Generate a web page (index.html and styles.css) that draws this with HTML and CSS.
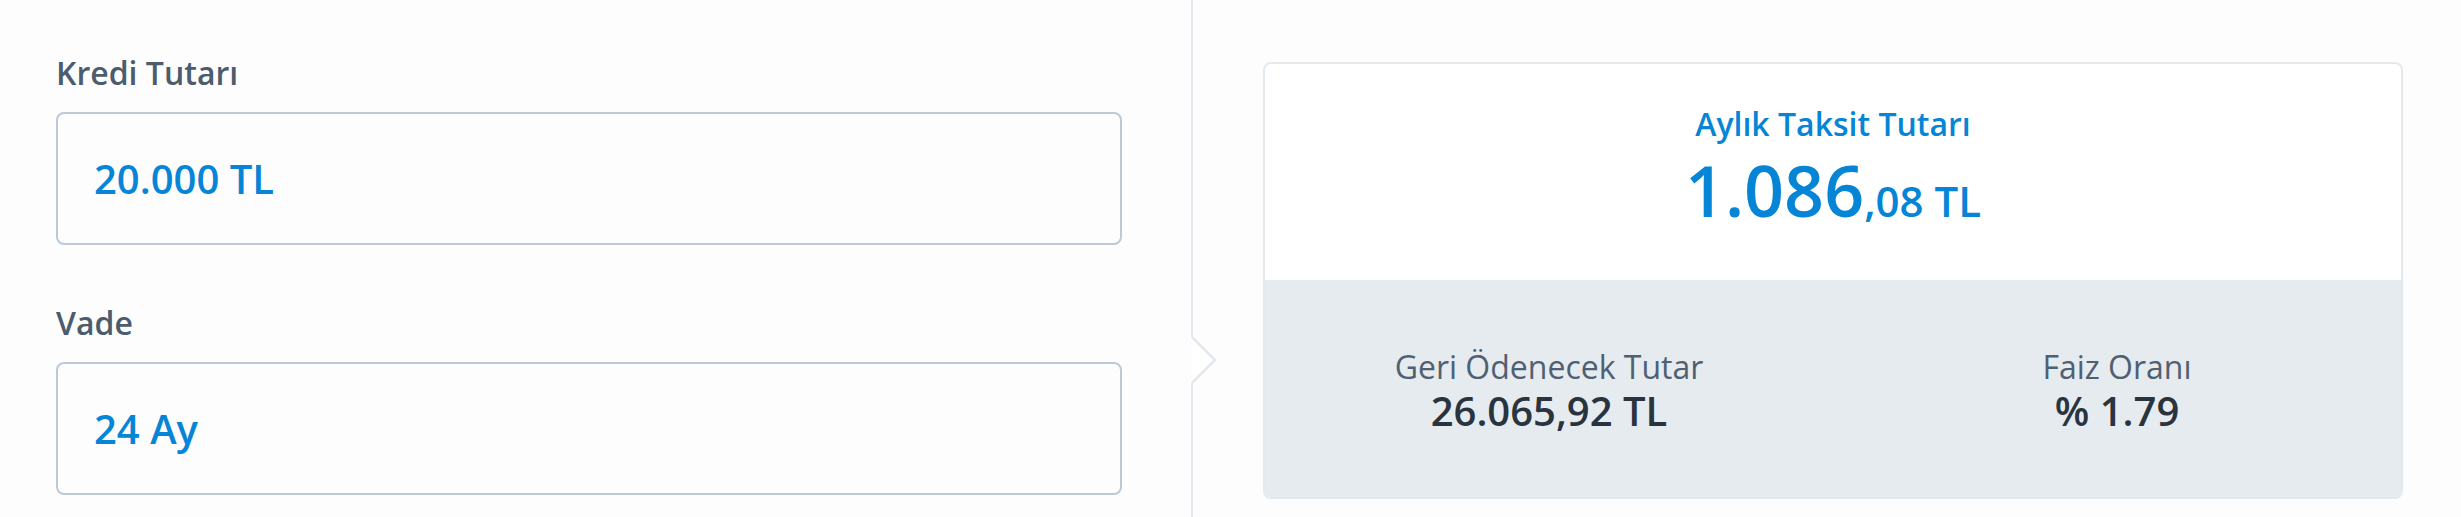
FILE: index.html
```html
<!DOCTYPE html>
<html lang="tr">
<head>
    <meta charset="UTF-8">
    <meta name="viewport" content="width=device-width, initial-scale=1.0">
    <title>Kredi Hesaplama</title>
    <link rel="stylesheet" href="styles.css">
</head>
<body>
    <div class="calculator">
        <div class="form-side">
            <div class="field">
                <label for="amount">Kredi Tutarı</label>
                <input type="text" id="amount" name="amount" value="20.000 TL">
            </div>
            <div class="field">
                <label for="term">Vade</label>
                <input type="text" id="term" name="term" value="24 Ay">
            </div>
        </div>
        <div class="divider">
            <span class="line line-top"></span>
            <svg class="chevron" width="26" height="46" viewBox="0 0 26 46">
                <path d="M1 0 L24 23 L1 46" fill="#ffffff" stroke="#e3e8ee" stroke-width="2.5"/>
            </svg>
            <span class="line line-bottom"></span>
        </div>
        <div class="result-side">
            <div class="result-card">
                <div class="summary">
                    <div class="summary-title">Aylık Taksit Tutarı</div>
                    <div class="summary-amount">1.086<span class="decimals">,08 TL</span></div>
                </div>
                <div class="totals">
                    <div class="total">
                        <div class="total-label">Geri Ödenecek Tutar</div>
                        <div class="total-value">26.065,92 TL</div>
                    </div>
                    <div class="total">
                        <div class="total-label">Faiz Oranı</div>
                        <div class="total-value">% 1.79</div>
                    </div>
                </div>
            </div>
        </div>
    </div>
</body>
</html>
```

FILE: styles.css
```css
body {
    margin: 0;
    padding: 0;
    background-color: #fdfdfe;
    font-family: "Open Sans", "Noto Sans", sans-serif;
}
.calculator {
    display: flex;
    height: 517px;
}
.form-side {
    width: 1191px;
    box-sizing: border-box;
    padding: 51px 69px 0 56px;
    display: flex;
    flex-direction: column;
    gap: 56px;
}
.field {
    display: flex;
    flex-direction: column;
}
.field label {
    color: #4b5c6e;
    font-size: 32px;
    font-weight: 600;
    line-height: 44px;
    margin-bottom: 17px;
}
.field input {
    font-family: inherit;
    font-size: 40px;
    font-weight: 600;
    color: #0685d6;
    background-color: #fdfdfe;
    border: 2px solid #bccad7;
    border-radius: 8px;
    padding: 37px 36px;
    line-height: 54px;
    height: 133px;
    box-sizing: border-box;
    outline: none;
}
.divider {
    width: 26px;
    display: flex;
    flex-direction: column;
}
.line {
    display: block;
    width: 2px;
    background-color: #e3e8ee;
}
.line-top {
    height: 337px;
}
.line-bottom {
    flex: 1;
}
.chevron {
    display: block;
}
.result-side {
    flex: 1;
    padding: 62px 58px 0 46px;
}
.result-card {
    border: 2px solid #e4e9ee;
    border-radius: 8px;
    overflow: hidden;
    background-color: #ffffff;
}
.summary {
    height: 216px;
    box-sizing: border-box;
    padding-top: 38px;
    text-align: center;
    color: #0685d6;
}
.summary-title {
    font-size: 32px;
    font-weight: 600;
    line-height: 44px;
}
.summary-amount {
    margin-top: 9px;
    font-size: 70px;
    font-weight: 600;
    line-height: 1;
}
.decimals {
    font-size: 42px;
}
.totals {
    display: flex;
    height: 217px;
    box-sizing: border-box;
    padding-top: 67px;
    background-color: #e6ebf0;
}
.total {
    flex: 1;
    text-align: center;
}
.total-label {
    color: #4f6072;
    font-size: 32px;
    line-height: 40px;
}
.total-value {
    color: #29343f;
    font-size: 40px;
    font-weight: 600;
    line-height: 48px;
}
```
